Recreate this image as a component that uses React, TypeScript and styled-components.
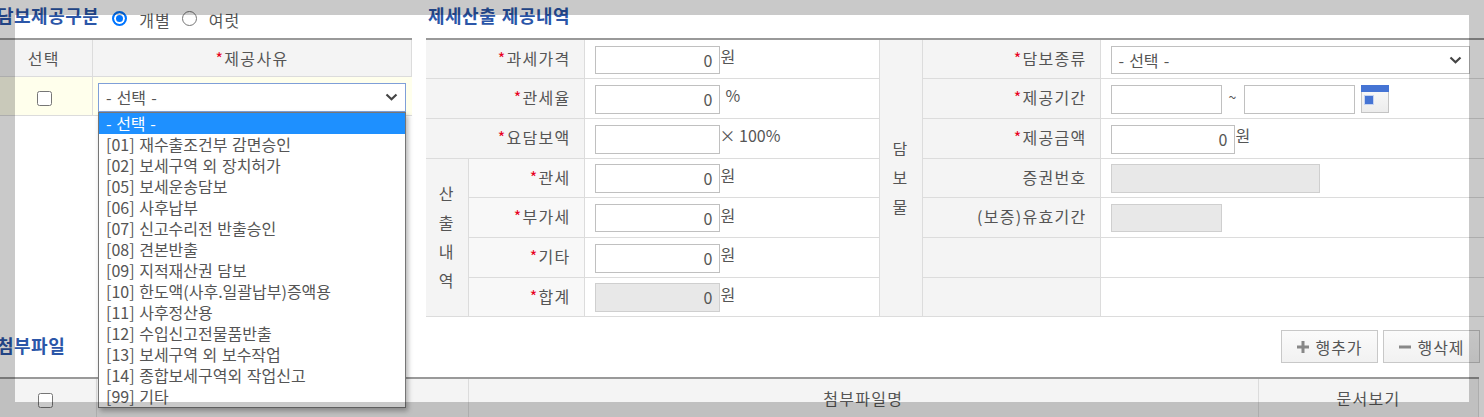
import styled, { createGlobalStyle } from 'styled-components';

const GlobalStyle = createGlobalStyle`
  html, body {
    margin: 0;
    padding: 0;
    background: #fff;
    overflow: hidden;
  }
  body {
    width: 1484px;
    height: 417px;
    font-family: "Noto Sans CJK KR", "Liberation Sans", sans-serif;
    font-size: 16px;
    color: #555;
  }
`;

const Wrapper = styled.div`
  position: relative;
  width: 1484px;
  height: 417px;
  overflow: hidden;
`;

// dimmed frame of the popup, sits above everything
const Dim = styled.div`
  position: absolute;
  inset: 0;
  box-sizing: border-box;
  border: 15px solid rgba(0, 0, 0, 0.21);
  pointer-events: none;
  z-index: 20;
`;

const Columns = styled.div`
  display: grid;
  grid-template-columns: 412px 1070px;
  column-gap: 14px;
  height: 330px;
`;

const Title = styled.h2<{ $shift?: number }>`
  margin: 3px 0 0 ${p => p.$shift ?? 0}px;
  font-size: 18px;
  line-height: 24px;
  font-weight: 700;
  letter-spacing: 0.5px;
  word-spacing: 1px;
  color: #2b56a8;
  white-space: nowrap;
`;

const Head = styled.div`
  display: flex;
  align-items: flex-start;
  height: 38px;
`;

const Radio = styled.span<{ $on?: boolean }>`
  box-sizing: border-box;
  flex: none;
  width: 15px;
  height: 15px;
  margin-top: 11px;
  margin-left: ${p => (p.$on ? 13 : 11)}px;
  border-radius: 50%;
  border: ${p => (p.$on ? '2px solid #0075ff' : '1px solid #767676')};
  background: ${p => (p.$on ? '#0075ff' : '#fff')};
  box-shadow: ${p => (p.$on ? 'inset 0 0 0 2px #fff' : 'none')};
`;

const RadioText = styled.span`
  margin: 8px 0 0 12px;
  line-height: 24px;
  letter-spacing: 1px;
`;

const Table = styled.table`
  border-collapse: collapse;
  table-layout: fixed;
  width: 100%;
  border-top: 2px solid #999;
`;

const Th = styled.th<{ $w?: number; $soft?: boolean }>`
  width: ${p => (p.$w ? `${p.$w}px` : 'auto')};
  box-sizing: border-box;
  padding: 0 13px 2px 0;
  background: ${p => (p.$soft ? '#f8f8f8' : '#f4f4f4')};
  border: 1px solid #dcdcdc;
  border-top: 0;
  font-weight: 400;
  font-size: 16px;
  letter-spacing: 1.3px;
  color: #555;
  text-align: right;
  white-space: nowrap;
  &:first-child { border-left: 0; }
`;

const CenterTh = styled(Th)`
  padding: 0;
  text-align: center;
`;

const StackTh = styled(CenterTh)`
  line-height: 29px;
`;

const Td = styled.td`
  box-sizing: border-box;
  padding: 2px 0 0 10px;
  border: 1px solid #dcdcdc;
  border-top: 0;
  white-space: nowrap;
  &:last-child { border-right: 0; }
`;

const LeftTable = styled(Table)`
  width: 417px;
  margin-left: -5px;
  tr:first-child { height: 37px; }
  tr:last-child { height: 39px; }
`;

const SelectedTd = styled(Td)<{ $center?: boolean }>`
  position: relative;
  background: #ffffec;
  padding: ${p => (p.$center ? 0 : '3px 5px 0')};
  text-align: ${p => (p.$center ? 'center' : 'left')};
  border-right: 1px solid #dcdcdc;
`;

const Check = styled.span`
  display: inline-block;
  vertical-align: middle;
  box-sizing: border-box;
  width: 15px;
  height: 15px;
  border: 1px solid #767676;
  border-radius: 2.5px;
  background: #fff;
`;

const SelectBox = styled.div<{ $focus?: boolean; $w: number }>`
  box-sizing: border-box;
  width: ${p => p.$w}px;
  height: 29px;
  display: flex;
  align-items: center;
  justify-content: space-between;
  padding: 0 7px 0 7px;
  background: #fff;
  border: 1px solid ${p => (p.$focus ? '#7f9fd8' : '#c0c0c0')};
  word-spacing: 1.5px;
  color: #555;
`;

const Dropdown = styled.ul`
  position: absolute;
  left: 5px;
  top: 35px;
  box-sizing: border-box;
  width: 308px;
  margin: 0;
  padding: 0;
  list-style: none;
  background: #fff;
  border: 1px solid #767676;
  box-shadow: 2px 3px 5px rgba(0, 0, 0, 0.3);
  z-index: 10;
`;

const Option = styled.li<{ $active?: boolean }>`
  height: 21px;
  line-height: 20px;
  padding-left: 7px;
  word-spacing: 1px;
  white-space: nowrap;
  color: ${p => (p.$active ? '#fff' : '#555')};
  background: ${p => (p.$active ? '#1e90ff' : '#fff')};
`;

const Input = styled.span<{ $w: number; $disabled?: boolean }>`
  display: inline-block;
  vertical-align: middle;
  box-sizing: border-box;
  width: ${p => p.$w}px;
  height: 29px;
  line-height: 26px;
  padding-right: 6px;
  text-align: right;
  background: ${p => (p.$disabled ? '#e8e8e8' : '#fff')};
  border: 1px solid ${p => (p.$disabled ? '#cfcfcf' : '#c0c0c0')};
  color: #555;
`;

const RightTable = styled(Table)`
  tr { height: 40px; }
  tr:nth-child(1), tr:nth-child(4), tr:nth-child(7) { height: 39px; }
  tr:nth-child(1) ${Input}, tr:nth-child(5) ${Input}, tr:nth-child(1) ${SelectBox} { height: 28px; }
`;

const Req = styled.span`
  color: #e8001c;
`;

const Unit = styled.span<{ $gap?: number }>`
  margin-left: ${p => p.$gap ?? 1}px;
  position: relative;
  top: -1px;
`;

const Tilde = styled.span`
  display: inline-block;
  width: 22px;
  text-align: center;
  font-size: 14px;
`;

const Calendar = styled.svg`
  vertical-align: middle;
  margin-left: 6px;
`;

const Attach = styled.div`
  display: flex;
  align-items: flex-start;
  justify-content: space-between;
  height: 47px;
`;

const Buttons = styled.div`
  display: flex;
  gap: 5px;
  margin-right: 4px;
`;

const Button = styled.button`
  box-sizing: border-box;
  width: 97px;
  height: 33px;
  display: flex;
  align-items: center;
  justify-content: center;
  gap: 5px;
  padding: 0;
  border: 1px solid #c8c8c8;
  background: linear-gradient(#fbfbfb, #f1f1f1);
  font: inherit;
  letter-spacing: 1px;
  color: #555;
`;

const BottomTable = styled(Table)`
  width: 1484px;
  margin-left: -5px;
  tr { height: 40px; }
`;

const Chevron = () => (
  <svg width="13" height="8" viewBox="0 0 13 8">
    <path d="M1.5 1.5 L6.5 6.2 L11.5 1.5" fill="none" stroke="#444" strokeWidth="2.2" />
  </svg>
);

const OPTIONS = [
  '- 선택 -',
  '[01] 재수출조건부 감면승인',
  '[02] 보세구역 외 장치허가',
  '[05] 보세운송담보',
  '[06] 사후납부',
  '[07] 신고수리전 반출승인',
  '[08] 견본반출',
  '[09] 지적재산권 담보',
  '[10] 한도액(사후.일괄납부)증액용',
  '[11] 사후정산용',
  '[12] 수입신고전물품반출',
  '[13] 보세구역 외 보수작업',
  '[14] 종합보세구역외 작업신고',
  '[99] 기타',
];

export default function App() {
  return (
    <Wrapper>
      <GlobalStyle />
      <Columns>
        <div>
          <Head>
            <Title $shift={-3}>담보제공구분</Title>
            <Radio $on />
            <RadioText>개별</RadioText>
            <Radio />
            <RadioText>여럿</RadioText>
          </Head>
          <LeftTable>
            <tbody>
              <tr>
                <CenterTh $w={97}>선택</CenterTh>
                <CenterTh><Req>*</Req>제공사유</CenterTh>
              </tr>
              <tr>
                <SelectedTd $center><Check /></SelectedTd>
                <SelectedTd>
                  <SelectBox $focus $w={308}>- 선택 -<Chevron /></SelectBox>
                  <Dropdown>
                    {OPTIONS.map((o, i) => <Option key={o} $active={i === 0}>{o}</Option>)}
                  </Dropdown>
                </SelectedTd>
              </tr>
            </tbody>
          </LeftTable>
        </div>
        <div>
          <Head><Title $shift={2}>제세산출 제공내역</Title></Head>
          <RightTable>
            <colgroup>
              <col style={{ width: 42 }} />
              <col style={{ width: 116 }} />
              <col style={{ width: 295 }} />
              <col style={{ width: 43 }} />
              <col style={{ width: 178 }} />
              <col />
            </colgroup>
            <tbody>
              <tr>
                <Th colSpan={2}><Req>*</Req>과세가격</Th>
                <Td><Input $w={125}>0</Input><Unit>원</Unit></Td>
                <StackTh rowSpan={7}>담<br />보<br />물</StackTh>
                <Th><Req>*</Req>담보종류</Th>
                <Td><SelectBox $w={359}>- 선택 -<Chevron /></SelectBox></Td>
              </tr>
              <tr>
                <Th colSpan={2}><Req>*</Req>관세율</Th>
                <Td><Input $w={125}>0</Input><Unit $gap={6}>%</Unit></Td>
                <Th><Req>*</Req>제공기간</Th>
                <Td>
                  <Input $w={111} /><Tilde>~</Tilde><Input $w={111} />
                  <Calendar width="28" height="28" viewBox="0 0 28 28">
                    <defs>
                      <linearGradient id="calBody" x1="0" y1="0" x2="0" y2="1">
                        <stop offset="0" stopColor="#fafafa" />
                        <stop offset="1" stopColor="#ececec" />
                      </linearGradient>
                    </defs>
                    <rect x="0.5" y="0.5" width="27" height="27" fill="url(#calBody)" stroke="#c4c4c4" />
                    <rect width="28" height="7" fill="#4574d4" />
                    <rect x="3.5" y="10.5" width="9" height="9" fill="#4574d4" stroke="#c5d3f0" />
                  </Calendar>
                </Td>
              </tr>
              <tr>
                <Th colSpan={2}><Req>*</Req>요담보액</Th>
                <Td><Input $w={125} /><Unit $gap={0}>× 100%</Unit></Td>
                <Th><Req>*</Req>제공금액</Th>
                <Td><Input $w={124}>0</Input><Unit>원</Unit></Td>
              </tr>
              <tr>
                <StackTh rowSpan={4}>산<br />출<br />내<br />역</StackTh>
                <Th $soft><Req>*</Req>관세</Th>
                <Td><Input $w={125}>0</Input><Unit>원</Unit></Td>
                <Th>증권번호</Th>
                <Td><Input $w={209} $disabled /></Td>
              </tr>
              <tr>
                <Th $soft><Req>*</Req>부가세</Th>
                <Td><Input $w={125}>0</Input><Unit>원</Unit></Td>
                <Th>(보증)유효기간</Th>
                <Td><Input $w={111} $disabled /></Td>
              </tr>
              <tr>
                <Th $soft><Req>*</Req>기타</Th>
                <Td><Input $w={125}>0</Input><Unit>원</Unit></Td>
                <Th />
                <Td />
              </tr>
              <tr>
                <Th $soft><Req>*</Req>합계</Th>
                <Td><Input $w={125} $disabled>0</Input><Unit>원</Unit></Td>
                <Th />
                <Td />
              </tr>
            </tbody>
          </RightTable>
        </div>
      </Columns>
      <Attach>
        <Title $shift={-3}>첨부파일</Title>
        <Buttons>
          <Button>
            <svg width="14" height="14" viewBox="0 0 14 14"><path d="M7 1v12M1 7h12" stroke="#888" strokeWidth="3" /></svg>
            행추가
          </Button>
          <Button>
            <svg width="14" height="14" viewBox="0 0 14 14"><path d="M1 7h12" stroke="#888" strokeWidth="3" /></svg>
            행삭제
          </Button>
        </Buttons>
      </Attach>
      <BottomTable>
        <tbody>
          <tr>
            <CenterTh $w={101}><Check /></CenterTh>
            <CenterTh $w={372} />
            <CenterTh>첨부파일명</CenterTh>
            <CenterTh $w={220}>문서보기</CenterTh>
          </tr>
        </tbody>
      </BottomTable>
      <Dim />
    </Wrapper>
  );
}
